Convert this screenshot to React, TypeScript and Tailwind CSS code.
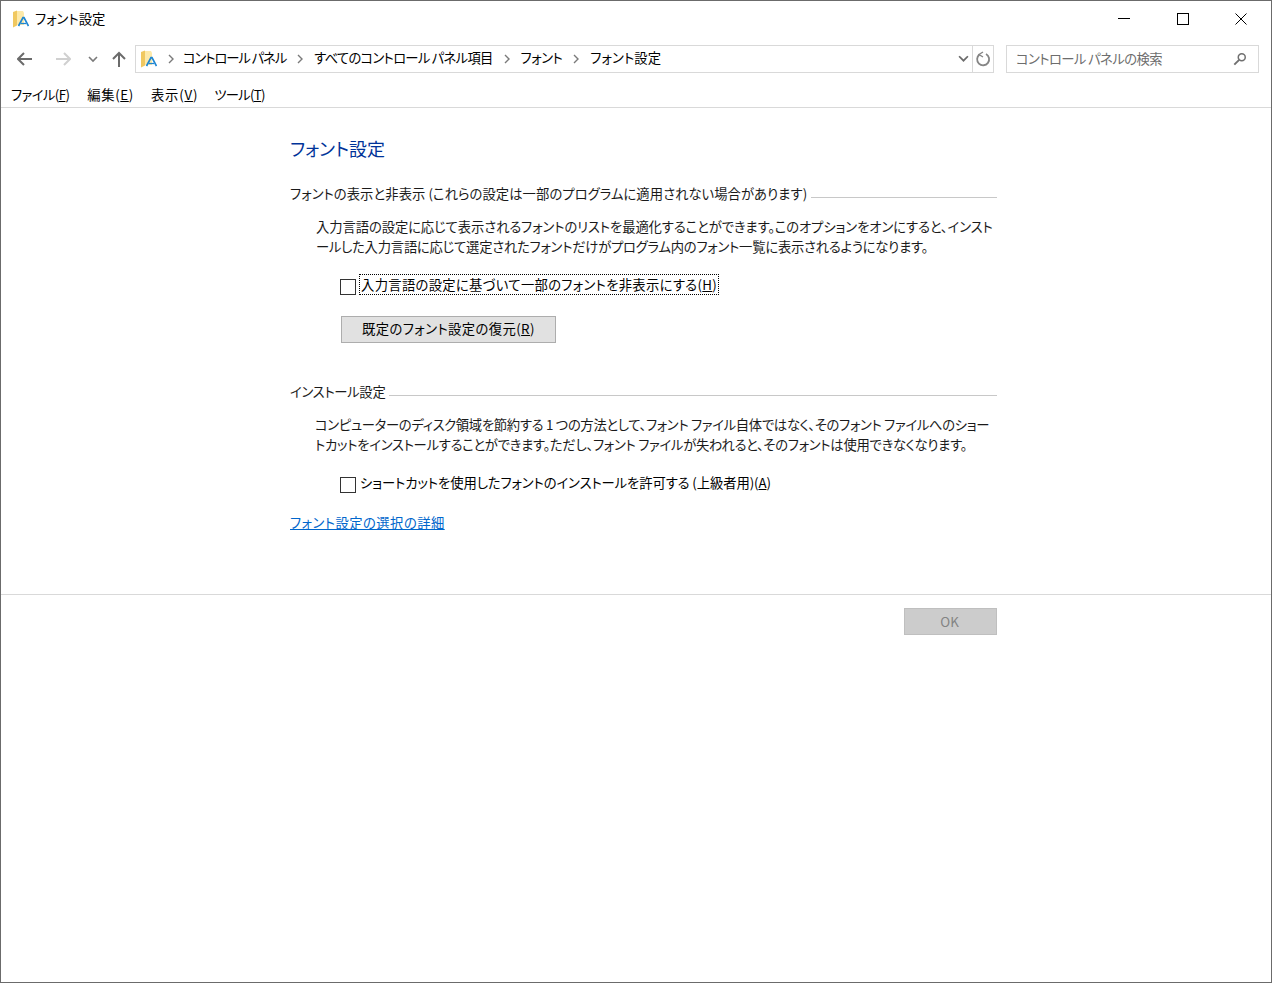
const FontIcon = ({ className }: { className: string }) => (
  <svg viewBox="0 0 16 18" className={className}>
    <path d="M4 1 H10 L11 3 V15 H4 Z" fill="#fde9a9" />
    <path d="M0 2 L4 0.5 V15.5 L0 17.5 Z" fill="#f0c860" />
    <path d="M5.5 16 L10 7.5 H11 L15.5 16" fill="none" stroke="#1f86d1" strokeWidth="1.7" />
    <path d="M8 13.5 H13" stroke="#1f86d1" strokeWidth="1.3" />
  </svg>
);

const Crumb = ({ children, className }: { children: string; className: string }) => (
  <>
    <svg viewBox="0 0 8 10" className="w-2 h-2.5 mx-[10px] shrink-0">
      <path d="M2 1 L6 5 L2 9" fill="none" stroke="#7a7a7a" strokeWidth="1.4" />
    </svg>
    <span className={`whitespace-nowrap pb-[3px] ${className}`}>{children}</span>
  </>
);

const MenuItem = ({ label, k, className }: { label: string; k: string; className: string }) => (
  <span className={`whitespace-nowrap ${className}`}>
    {label}(<u>{k}</u>)
  </span>
);

const SectionTitle = ({ children, className }: { children: string; className: string }) => (
  <div className="flex items-center h-5 text-[#1a1a1a]">
    <span className={`whitespace-nowrap pr-1 ${className}`}>{children}</span>
    <div className="flex-1 h-px bg-[#c8c8c8] mt-[6px]" />
  </div>
);

const CheckBox = () => <div className="w-4 h-4 border border-[#333333] bg-white shrink-0" />;

export default function App() {
  return (
    <div className="w-[1272px] h-[983px] bg-white border border-[#6b6b6b] overflow-hidden text-[13.33px] text-black font-['Noto_Sans_CJK_JP',sans-serif] [font-feature-settings:'palt']">
      {/* title bar */}
      <div className="h-[37px] flex items-center pb-[2px]">
        <FontIcon className="w-4 h-[18px] ml-3" />
        <span className="ml-[6px]">フォント設定</span>
        <div className="ml-auto mr-[1px] flex items-center">
          <div className="w-[58px] flex justify-center">
            <div className="w-3 h-px bg-black" />
          </div>
          <div className="w-[59px] flex justify-center">
            <div className="w-3 h-3 border border-black" />
          </div>
          <div className="w-[58px] flex justify-center">
            <svg viewBox="0 0 12 12" className="w-3 h-3">
              <path d="M0.5 0.5 L11.5 11.5 M11.5 0.5 L0.5 11.5" stroke="#000" strokeWidth="1" />
            </svg>
          </div>
        </div>
      </div>

      {/* address row */}
      <div className="h-7 mt-[7px] flex items-center">
        <svg viewBox="0 0 16 14" className="w-4 h-[14px] ml-4">
          <path d="M1 7 H15 M7 1 L1 7 L7 13" fill="none" stroke="#6b6b6b" strokeWidth="2" />
        </svg>
        <svg viewBox="0 0 16 14" className="w-4 h-[14px] ml-[22px]">
          <path d="M1 7 H15 M9 1 L15 7 L9 13" fill="none" stroke="#d0d0d0" strokeWidth="2" />
        </svg>
        <svg viewBox="0 0 10 7" className="w-2.5 h-[7px] ml-[17px]">
          <path d="M1 1 L5 5 L9 1" fill="none" stroke="#7a7a7a" strokeWidth="1.6" />
        </svg>
        <svg viewBox="0 0 14 16" className="w-[14px] h-4 ml-[14px]">
          <path d="M7 16 V2 M1 8 L7 2 L13 8" fill="none" stroke="#6b6b6b" strokeWidth="2" />
        </svg>
        <div className="ml-[9px] w-[859px] h-7 border border-[#d9d9d9] flex items-center">
          <FontIcon className="w-4 h-[18px] ml-[5px] shrink-0" />
          <div className="flex items-center">
            <Crumb className="-ml-[2px] tracking-[-1.1px]">コントロール パネル</Crumb>
            <Crumb className="tracking-[-0.73px]">すべてのコントロール パネル項目</Crumb>
            <Crumb className="tracking-[-0.5px]">フォント</Crumb>
            <Crumb className="tracking-[0.1px]">フォント設定</Crumb>
          </div>
          <div className="ml-auto flex items-center h-full">
            <svg viewBox="0 0 10 7" className="w-[11px] h-2 mr-[3px]">
              <path d="M1 1 L5 5 L9 1" fill="none" stroke="#6b6b6b" strokeWidth="1.6" />
            </svg>
            <div className="w-[21px] h-full border-l border-[#d9d9d9] flex items-center justify-center">
              <svg viewBox="0 0 16 16" className="w-4 h-4">
                <path d="M4.5 3.5 A6 6 0 1 0 11 3" fill="none" stroke="#858585" strokeWidth="1.8" />
                <path d="M8 1 L4 3.5 L8 6" fill="none" stroke="#858585" strokeWidth="1.4" />
              </svg>
            </div>
          </div>
        </div>
        <div className="ml-[12px] w-[253px] h-7 border border-[#d9d9d9] flex items-center pl-[9px] text-[#6d6d6d]">
          <span className="tracking-[-0.6px]">コントロール パネルの検索</span>
          <svg viewBox="0 0 16 16" className="w-[14px] h-[14px] ml-auto mr-[11px]">
            <circle cx="10" cy="6" r="4" fill="none" stroke="#707070" strokeWidth="1.7" />
            <path d="M7 9 L1.5 14.5" stroke="#707070" strokeWidth="2.2" />
          </svg>
        </div>
      </div>

      {/* menu */}
      <div className="h-[35px] border-b border-[#d9d9d9] flex items-end pb-[2px] pl-[10px] gap-[18px] leading-5">
        <MenuItem label="ファイル" k="F" className="tracking-[-0.6px]" />
        <MenuItem label="編集" k="E" className="tracking-[0.6px]" />
        <MenuItem label="表示" k="V" className="-ml-[1px] tracking-[0.8px]" />
        <MenuItem label="ツール" k="T" className="-ml-[2px] tracking-[-0.7px]" />
      </div>

      {/* content */}
      <div className="h-[487px] border-b border-[#d9d9d9]">
        <div className="ml-[289px] w-[707px] pt-[26px]">
          <h1 className="text-[18px] leading-7 text-[#003399] font-normal">フォント設定</h1>

          <div className="mt-[22px]">
            <SectionTitle className="tracking-[0.05px]">フォントの表示と非表示 (これらの設定は一部のプログラムに適用されない場合があります)</SectionTitle>
          </div>
          <p className="ml-[26px] mt-[13px] leading-5 whitespace-nowrap text-[#1a1a1a]">
            <span className="block tracking-[-0.1px]">入力言語の設定に応じて表示されるフォントのリストを最適化することができます。このオプションをオンにすると、インスト</span>
            <span className="block tracking-[-0.24px]">ールした入力言語に応じて選定されたフォントだけがプログラム内のフォント一覧に表示されるようになります。</span>
          </p>
          <div className="ml-[50px] mt-[17px] flex items-start">
            <div className="mt-[5px]">
              <CheckBox />
            </div>
            <span className="ml-[3px] h-[21px] leading-[19px] px-[1px] border border-dotted border-black whitespace-nowrap tracking-[0.3px]">
              入力言語の設定に基づいて一部のフォントを非表示にする(<u>H</u>)
            </span>
          </div>
          <button className="ml-[51px] mt-[21px] w-[215px] h-[27px] bg-[#e1e1e1] border border-[#adadad] block leading-5 pb-[2px] tracking-[0.4px]">
            既定のフォント設定の復元(<u>R</u>)
          </button>

          <div className="mt-[39px]">
            <SectionTitle className="tracking-[-0.3px]">インストール設定</SectionTitle>
          </div>
          <p className="ml-[25px] mt-[13px] leading-5 whitespace-nowrap text-[#1a1a1a]">
            <span className="block tracking-[-0.32px]">コンピューターのディスク領域を節約する 1 つの方法として、フォント ファイル自体ではなく、そのフォント ファイルへのショー</span>
            <span className="block tracking-[-0.28px]">トカットをインストールすることができます。ただし、フォント ファイルが失われると、そのフォントは使用できなくなります。</span>
          </p>
          <div className="ml-[50px] mt-[20px] flex items-center h-5">
            <CheckBox />
            <span className="ml-[4px] pb-[4px] whitespace-nowrap tracking-[-0.1px]">
              ショートカットを使用したフォントのインストールを許可する (上級者用)(<u>A</u>)
            </span>
          </div>
          <a className="block mt-[18px] leading-5 underline text-[#0066cc] whitespace-nowrap tracking-[0.45px]">フォント設定の選択の詳細</a>
        </div>
      </div>

      {/* footer */}
      <div className="ml-[903px] w-[93px] mt-[13px]">
        <div className="h-[27px] bg-[#cccccc] border border-[#bfbfbf] flex items-center justify-center pr-[2px] text-[#838383]">
          OK
        </div>
      </div>
    </div>
  );
}
